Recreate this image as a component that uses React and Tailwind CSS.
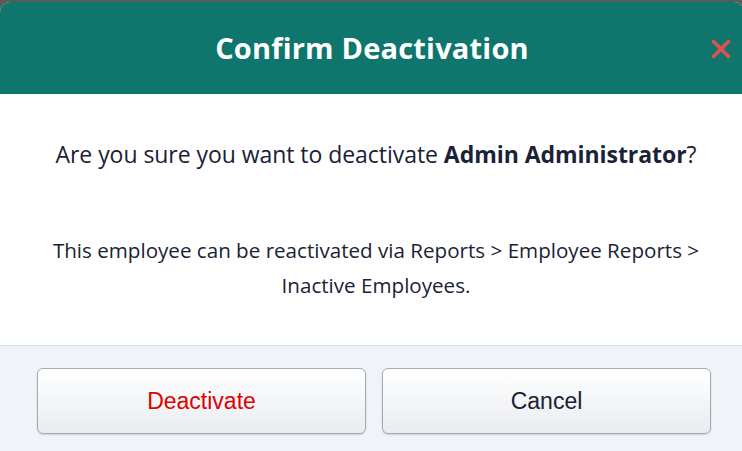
import { X } from 'lucide-react';

export default function App() {
  return (
    <div className="w-[742px] h-[451px] bg-[#5a5a5a] pt-[2px] overflow-hidden" style={{ fontFamily: '"Open Sans", "Noto Sans", sans-serif' }}>
      <div className="w-[744px] h-[449px] rounded-tl-[10px] rounded-tr-[10px] overflow-hidden bg-white flex flex-col">
        {/* Header */}
        <div className="h-[92px] bg-[#0e766d] flex items-center justify-center relative">
          <h1 className="text-white font-bold text-[29px] tracking-[0.2px] mt-[-1px]">Confirm Deactivation</h1>
          <button type="button" className="absolute right-[8px] top-[32px] text-[#d9534f]">
            <X size={30} strokeWidth={3} />
          </button>
        </div>

        {/* Body */}
        <div className="h-[251px] flex flex-col items-center text-[#1a2236] pl-6 pr-4">
          <p className="mt-[43px] text-[23px] tracking-[-0.05px]">
            Are you sure you want to deactivate <span className="font-bold">Admin Administrator</span>?
          </p>
          <p className="mt-[61px] text-center leading-[35px] text-[20.6px] max-w-[700px]">
            This employee can be reactivated via Reports &gt; Employee Reports &gt; Inactive Employees.
          </p>
        </div>

        {/* Footer */}
        <div className="flex-1 bg-[#f0f4f8] border-t border-[#dde3ea] flex gap-[16px] pl-[37px] pr-[33px] pt-[22px]">
          <button
            type="button"
            className="w-[329px] h-[66px] rounded-[6px] border border-[#a3aab4] bg-gradient-to-b from-white to-[#e9ecf0] shadow-[0_1px_2px_rgba(0,0,0,0.15)] text-[#e00000] text-[23px]"
            style={{ fontFamily: '"Liberation Sans", Arial, sans-serif' }}
          >
            Deactivate
          </button>
          <button
            type="button"
            className="w-[329px] h-[66px] rounded-[6px] border border-[#a3aab4] bg-gradient-to-b from-white to-[#e9ecf0] shadow-[0_1px_2px_rgba(0,0,0,0.15)] text-[#1a2236] text-[23px]"
            style={{ fontFamily: '"Liberation Sans", Arial, sans-serif' }}
          >
            Cancel
          </button>
        </div>
      </div>
    </div>
  );
}
